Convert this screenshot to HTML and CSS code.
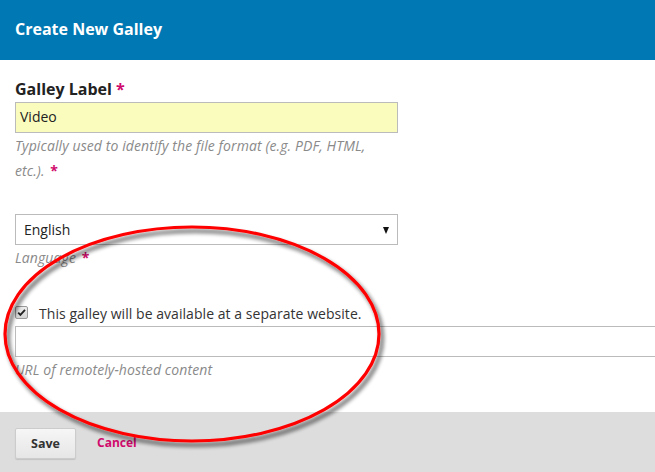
FILE: index.html
```html
<!DOCTYPE html>
<html lang="en">
<head>
<meta charset="utf-8">
<title>Create New Galley</title>
<link rel="stylesheet" href="styles.css">
</head>
<body>
<div class="page">
  <header class="header">
    <h1 class="title">Create New Galley</h1>
  </header>
  <form class="form">
    <div class="field field-label">
      <label class="label">Galley Label <span class="req">*</span></label>
      <div class="input input-yellow">Video</div>
      <div class="help help-narrow">Typically used to identify the file format (e.g. PDF, HTML, etc.). <span class="req">*</span></div>
    </div>
    <div class="field field-lang">
      <div class="input select">English<span class="arrow"></span></div>
      <div class="help">Language <span class="req">*</span></div>
    </div>
    <div class="field field-remote">
      <div class="check-row">
        <span class="checkbox"><svg viewBox="0 0 12 12" width="11" height="11"><path d="M2.4 6.2 L4.8 8.6 L9.8 3.2" fill="none" stroke="#222" stroke-width="2"/></svg></span>
        <span class="check-text">This galley will be available at a separate website.</span>
      </div>
      <div class="input input-wide"></div>
      <div class="help">URL of remotely-hosted content</div>
    </div>
  </form>
  <footer class="footer">
    <button type="button" class="btn-save">Save</button>
    <a class="cancel">Cancel</a>
  </footer>
  <svg class="annotation" width="655" height="472" viewBox="0 0 655 472">
    <defs>
      <filter id="shadow" x="-10%" y="-10%" width="120%" height="130%">
        <feGaussianBlur in="SourceAlpha" stdDeviation="2.2"/>
        <feOffset dx="3" dy="4" result="b"/>
        <feComponentTransfer><feFuncA type="linear" slope="0.7"/></feComponentTransfer>
        <feMerge><feMergeNode/><feMergeNode in="SourceGraphic"/></feMerge>
      </filter>
    </defs>
    <ellipse cx="192" cy="334" rx="187" ry="107" fill="none" stroke="#ff0000" stroke-width="3.2" filter="url(#shadow)"/>
  </svg>
</div>
</body>
</html>
```
FILE: styles.css
```css
* { box-sizing: border-box; }
html, body { margin: 0; padding: 0; }
body {
  width: 655px;
  height: 472px;
  overflow: hidden;
  background: #fff;
  font-family: "Open Sans", "Noto Sans", sans-serif;
  color: #222;
}
.page {
  position: relative;
  width: 655px;
  height: 472px;
  display: flex;
  flex-direction: column;
}
.header {
  height: 60px;
  background: #0078b4;
  display: flex;
  align-items: center;
  padding: 0 15px;
  flex-shrink: 0;
}
.title {
  margin: 0;
  margin-top: -2px;
  font-size: 16px;
  font-weight: 700;
  color: #fff;
}
.form {
  flex: 1;
  padding: 18px 0 0 15px;
  display: flex;
  flex-direction: column;
}
.field { display: flex; flex-direction: column; }
.label {
  font-size: 16px;
  font-weight: 700;
  line-height: 22px;
  height: 24px;
  color: #222;
}
.req { color: #d00a6c; font-style: normal; font-weight: 700; }
.help .req { margin-left: 2px; }
.input {
  width: 383px;
  height: 31px;
  border: 1px solid #bbb;
  background: #fff;
  font-size: 14px;
  line-height: 29px;
  padding: 0 9px;
  color: #222;
}
.input-yellow { background: #fafcbe; padding-left: 4px; line-height: 28px; }
.help {
  width: 383px;
  font-size: 14px;
  font-style: italic;
  line-height: 25px;
  color: #8a8a8a;
  padding-top: 0;
  letter-spacing: 0.1px;
}
.help-narrow { width: 368px; }
.field-lang { margin-top: 31px; }
.select {
  position: relative;
  padding-left: 8px;
  line-height: 29px;
}
.arrow {
  position: absolute;
  right: 8px;
  top: 12px;
  width: 0;
  height: 0;
  border-left: 3.5px solid transparent;
  border-right: 3.5px solid transparent;
  border-top: 7px solid #111;
}
.field-remote { margin-top: 31px; }
.check-row {
  height: 24px;
  display: flex;
  align-items: center;
  gap: 11px;
}
.checkbox {
  flex-shrink: 0;
  width: 13px;
  height: 13px;
  border: 1px solid #999;
  border-radius: 2px;
  background: linear-gradient(#eee, #d4d4d4);
  display: flex;
  align-items: center;
  justify-content: center;
  margin-top: -2px;
}
.checkbox svg { display: block; }
.check-text {
  font-size: 14px;
  color: #333;
  letter-spacing: 0.05px;
}
.input-wide {
  width: 660px;
  margin-top: 1px;
  border-right: none;
}
.footer {
  height: 60px;
  background: #dddddd;
  flex-shrink: 0;
  display: flex;
  align-items: center;
  padding: 0 15px;
  gap: 21px;
}
.btn-save {
  width: 61px;
  height: 31px;
  border: 1px solid #ccc;
  border-radius: 2px;
  background: linear-gradient(#f6f6f6, #e6e6e6);
  box-shadow: 0 1px 1px rgba(0,0,0,0.12);
  font-family: "Open Sans", "Noto Sans", sans-serif;
  font-size: 12.5px;
  font-weight: 700;
  color: #333;
  padding: 0;
  margin-top: 3px;
}
.cancel {
  font-size: 12px;
  font-weight: 700;
  color: #d00a6c;
  margin-top: 1px;
}
.annotation {
  position: absolute;
  left: 0;
  top: 0;
  pointer-events: none;
}
```
